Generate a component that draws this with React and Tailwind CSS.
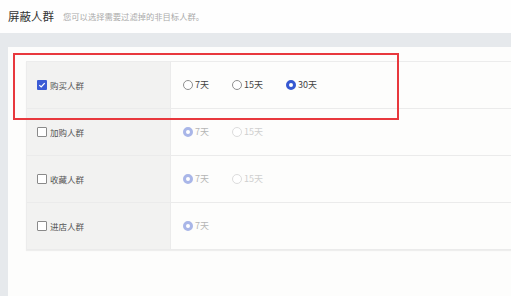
import React from 'react';

const font = { fontFamily: "'Noto Sans CJK SC', 'Liberation Sans', sans-serif" };

const rows = [
  { label: '购买人群', checked: true, options: [{ t: '7天' }, { t: '15天' }, { t: '30天', on: true }] },
  { label: '加购人群', options: [{ t: '7天', on: true }, { t: '15天' }], disabled: true },
  { label: '收藏人群', options: [{ t: '7天', on: true }, { t: '15天' }], disabled: true },
  { label: '进店人群', options: [{ t: '7天', on: true }], disabled: true },
];

const Checkbox = ({ checked }) =>
  checked ? (
    <span className="w-[10px] h-[10px] rounded-[1px] bg-[#3b5bd5] flex items-center justify-center">
      <svg width="8" height="8" viewBox="0 0 8 8">
        <path d="M1.3 4.1 3.2 5.9 6.7 2.1" fill="none" stroke="#fff" strokeWidth="1.3" />
      </svg>
    </span>
  ) : (
    <span className="w-[10px] h-[10px] rounded-[1px] border border-[#8a8a8a] bg-white" />
  );

const Radio = ({ on, disabled }) => {
  if (on) {
    return (
      <span
        className={`w-[10px] h-[10px] rounded-full border-[3px] bg-white ${
          disabled ? 'border-[#a9b6e8]' : 'border-[#3658d1]'
        }`}
      />
    );
  }
  return (
    <span
      className={`w-[10px] h-[10px] rounded-full border bg-white ${
        disabled ? 'border-[#dcdcdc]' : 'border-[#8f8f8f]'
      }`}
    />
  );
};

export default function App() {
  return (
    <div className="w-[511px] h-[296px] overflow-hidden bg-white flex flex-col" style={font}>
      <div className="h-[33px] flex items-center gap-[9px] px-2 bg-[#fefefe]">
        <span className="text-[11.5px] text-[#333]">屏蔽人群</span>
        <span className="text-[8.3px] text-[#aaa]">您可以选择需要过滤掉的非目标人群。</span>
      </div>
      <div className="flex-1 bg-[#e6e9ec] pt-[14px] pl-2 flex">
        <div className="relative flex-1 bg-[#fdfdfc] pt-[14px] pl-[18px]">
          <div className="border-t border-l border-[#ececec] shadow-[0_1px_1px_rgba(0,0,0,0.06)]">
            {rows.map((r) => (
              <div key={r.label} className="flex h-[47px] border-b border-[#ebebeb]">
                <div className="w-[144px] bg-[#f2f2f1] border-r border-[#ebebeb] flex items-center gap-[3px] pl-[10px]">
                  <Checkbox checked={r.checked} />
                  <span className="text-[8.5px] text-[#555]">{r.label}</span>
                </div>
                <div className="flex-1 flex items-center gap-[23px] pl-[12px]">
                  {r.options.map((o) => (
                    <div key={o.t} className="flex items-center gap-[2px]">
                      <Radio on={o.on} disabled={r.disabled} />
                      <span
                        className={`text-[9px] ${
                          r.disabled ? (o.on ? 'text-[#b5b5b5]' : 'text-[#cfcfcf]') : 'text-[#444]'
                        }`}
                      >
                        {o.t}
                      </span>
                    </div>
                  ))}
                </div>
              </div>
            ))}
          </div>
          <div className="absolute left-[5px] top-[6px] w-[386px] h-[67px] border-2 border-[#e8383d]" />
        </div>
      </div>
    </div>
  );
}
